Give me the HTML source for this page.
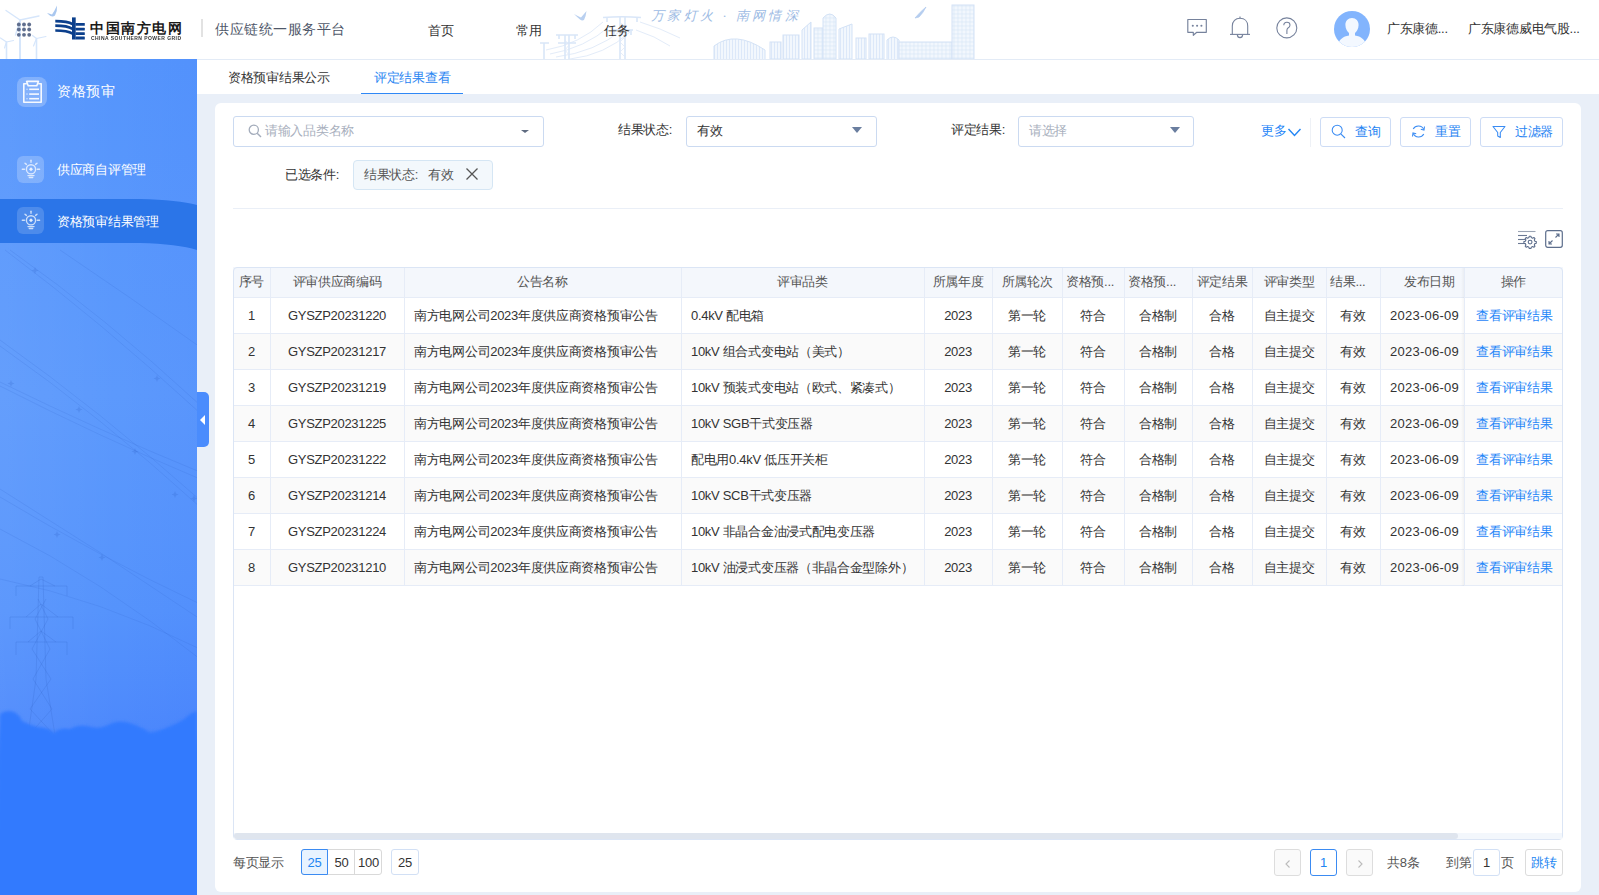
<!DOCTYPE html>
<html><head><meta charset="utf-8">
<style>
*{box-sizing:border-box;margin:0;padding:0}
html,body{width:1599px;height:895px;overflow:hidden;background:#e9eff8}
body{font-family:"Liberation Sans",sans-serif;font-size:13px;color:#333;position:relative;letter-spacing:-0.3px}
.a{position:absolute}
.t{position:absolute;white-space:nowrap;line-height:1}
#header{position:absolute;left:0;top:0;width:1599px;height:60px;background:#fff;border-bottom:1px solid #e3ebf6}
#side{position:absolute;left:0;top:59px;width:197px;height:836px;background:linear-gradient(90deg,rgba(255,255,255,0.05),rgba(255,255,255,0) 60%,rgba(0,40,255,0.03)),linear-gradient(180deg,#5595fc 0%,#5c99fc 40%,#5593fc 66%,#4d89fc 80%,#337afe 83%,#337afe 100%);overflow:hidden}
#tabs{position:absolute;left:197px;top:60px;width:1402px;height:34px;background:#fff}
#card{position:absolute;left:215px;top:103px;width:1366px;height:789px;background:#fff;border-radius:6px}
.inp{position:absolute;border:1px solid #cbdaf1;border-radius:3px;background:#fff;height:31px}
.caret{position:absolute;width:0;height:0;border-left:5px solid transparent;border-right:5px solid transparent;border-top:6px solid #6a7e9f}
.btn{position:absolute;border:1px solid #cddcf5;border-radius:3px;background:#fff;height:30px;color:#2c7ee2}
.thead{position:absolute;background:#f4f7fc}
.trow{position:absolute}
.hl{position:absolute;height:1px;background:#e6ecf7}
.vl{position:absolute;width:1px;background:#e6ecf7}
.th{position:absolute;text-align:center;color:#555;white-space:nowrap;overflow:hidden;font-size:13px}
.td{position:absolute;text-align:center;color:#333;white-space:nowrap;overflow:hidden;font-size:13px}
.td.l{text-align:left;padding-left:10px}
.td.link{color:#1f86f8;padding-left:2px}
.td.date{text-align:left;padding-left:10px;letter-spacing:0.25px}
.tbox{position:absolute;border:1px solid #dbe5f5;border-radius:4px}
.sbtrack{position:absolute;background:#f3f7fc}
.sbthumb{position:absolute;background:#dfe5ee;border-radius:3px}
.fixsh{position:absolute;width:3px;background:linear-gradient(90deg,rgba(0,0,0,0),rgba(0,0,0,0.04))}
.pg{position:absolute;height:27px;border:1px solid #dcdcdc;border-radius:3px;text-align:center;line-height:25px;background:#fff}
</style></head><body>

<div id="header">
  <!-- faint decoration left turbines -->
  <svg class="a" style="left:0;top:0" width="60" height="59" viewBox="0 0 60 59">
    <g stroke="#d6e6fb" fill="none" stroke-linecap="round">
      <path d="M20 20 L20 59" stroke-width="2"/>
      <path d="M20 20 L6 10.5 M20 20 L39 16 M20 20 L15.5 35" stroke-width="1.4"/>
      <path d="M6.5 42 L6.5 59 M36.5 38.5 L36.5 59" stroke-width="1.6"/>
      <path d="M6.5 42 L0.5 38 M6.5 42 L13.5 40.5 M6.5 42 L4.5 48 M36.5 38.5 L32.5 35.5 M36.5 38.5 L46 36.5 M36.5 38.5 L33.5 46" stroke-width="1.2"/>
    </g>
    <path d="M47 13 Q50 13.5 52 14.5 Q54.5 11 57 5.5 Q57.5 11 55 15.5 Q53 17 50.5 16 Q49 15 47 13 Z" fill="#a9c7ef"/>
  </svg>
  <!-- app grid dots -->
  <svg class="a" style="left:16px;top:22px" width="16" height="15" viewBox="0 0 16 15">
    <g fill="#5f6e8e">
      <circle cx="2.8" cy="2.5" r="1.9"/><circle cx="8" cy="2.5" r="1.9"/><circle cx="13.2" cy="2.5" r="1.9"/>
      <circle cx="2.8" cy="7.5" r="1.9"/><circle cx="8" cy="7.5" r="1.9"/><circle cx="13.2" cy="7.5" r="1.9"/>
      <circle cx="2.8" cy="12.8" r="1.9"/><circle cx="8" cy="12.8" r="1.9"/><circle cx="13.2" cy="12.8" r="1.9"/>
    </g>
  </svg>
  <!-- logo emblem -->
  <svg class="a" style="left:55px;top:17px" width="31" height="24" viewBox="0 0 31 24">
    <g fill="#0b3f8c">
      <rect x="17" y="0.4" width="3.7" height="22.1"/>
      <rect x="20.5" y="6" width="9.3" height="2.8" rx="0.5"/>
      <rect x="20.5" y="10.7" width="9.3" height="2.7" rx="0.5"/>
      <rect x="20.5" y="15.2" width="9.3" height="2.7" rx="0.5"/>
      <rect x="20.5" y="19.6" width="9.3" height="2.9" rx="0.5"/>
    </g>
    <g fill="none" stroke="#0b3f8c" stroke-width="2.7">
      <path d="M0.3 4.1 C8 4.1 13 4.3 17.5 7.2"/>
      <path d="M0.3 8.7 C8 8.7 13 9 17.5 11.9"/>
      <path d="M0.3 13.5 C8 13.5 13 13.8 17.5 16.6"/>
    </g>
  </svg>
  <div class="t" style="left:90px;top:21px;font-size:14px;font-weight:bold;color:#1a1a1a;letter-spacing:1.55px">中国南方电网</div>
  <div class="t" style="left:91px;top:35.5px;font-size:5px;font-weight:bold;color:#333;letter-spacing:0.45px;transform:scaleY(0.9)">CHINA SOUTHERN POWER GRID</div>
  <div class="a" style="left:201px;top:19px;width:2px;height:18px;background:#e2e2e2"></div>
  <div class="t" style="left:215px;top:22px;font-size:14px;color:#4f586a;letter-spacing:0.5px">供应链统一服务平台</div>

  <!-- pylons -->
  <svg class="a" style="left:540px;top:0" width="180" height="59" viewBox="0 0 180 59">
    <g fill="none" stroke="#e3ecf9" stroke-width="1">
      <path d="M6 50 Q40 44 63 22 M10 54 Q45 48 70 26 M16 57 Q55 52 82 30 M30 59 Q65 55 90 32"/>
      <path d="M100 22 Q120 28 140 38 M96 30 Q115 36 130 46"/>
    </g>
    <g fill="none" stroke="#d9e6f8" stroke-width="1.6">
      <path d="M63 17.5 Q82 16 101 17.5"/>
      <path d="M80 17 V59 M85 17 V59"/>
      <path d="M72 30 H93"/>
      <path d="M67 17 V22 M97 17 V22 M74 30 V35 M91 30 V35"/>
      <path d="M16 35 H38 M18 43 H36 M25 35 V59 M29 35 V59 M19 35 V39 M35 35 V39"/>
      <path d="M0 43 H9 M4 43 V59"/>
    </g>
    <g stroke="#dfe9f8" stroke-width="0.8" fill="none"><path d="M80 22 L85 27 L80 32 L85 37 L80 42 L85 47 L80 52 L85 57 M25 40 L29 45 L25 50 L29 55"/></g>
    <path d="M34 14 Q38 16 41 17.5 Q44 14 46.5 11 Q46 16 44 20 Q42 21 40 19.5 Q37 17 34 14 Z" fill="#b9d0f0"/>
  </svg>
  <!-- city decoration -->
  <svg class="a" style="left:560px;top:0" width="420" height="59" viewBox="0 0 420 59">
    <defs>
      <pattern id="win" width="3" height="3" patternUnits="userSpaceOnUse">
        <rect width="3" height="3" fill="#f2f7fd"/><line x1="1.5" y1="0" x2="1.5" y2="3" stroke="#d7e5f7" stroke-width="0.8"/>
      </pattern>
      <pattern id="grid" width="4" height="4" patternUnits="userSpaceOnUse">
        <rect width="4" height="4" fill="#f2f7fd"/><path d="M2 0 V4 M0 2 H4" stroke="#d9e6f7" stroke-width="0.7"/>
      </pattern>
    </defs>
    
    <g stroke="#d3e2f6" stroke-width="1">
      <path d="M154 59 V46 Q175 30 205 50 V59" fill="url(#win)"/>
      <rect x="210" y="42" width="11" height="17" fill="url(#win)"/>
      <rect x="223" y="35" width="16" height="24" fill="url(#win)"/>
      <path d="M242 59 V30 L251 22 V59 Z" fill="url(#win)"/>
      <rect x="254" y="28" width="9" height="31" fill="url(#grid)"/>
      <path d="M263 59 V18 Q270 10 276 18 V59 Z" fill="url(#grid)"/>
      <path d="M279 59 V29 L292 24 V59 Z" fill="url(#win)"/>
      <rect x="296" y="38" width="10" height="21" fill="url(#win)"/>
      <rect x="309" y="34" width="15" height="25" fill="url(#win)"/>
      <path d="M327 59 V40 Q333 34 339 40 V59" fill="url(#win)"/>
      <rect x="339" y="42" width="53" height="17" fill="url(#grid)"/>
      <rect x="392" y="5" width="22" height="54" fill="url(#grid)"/>
    </g>
    <path d="M355 18 Q360 12 366 7 Q363 13 359 17 Z" fill="#b5cdef" stroke="#b5cdef" stroke-width="0.8"/>
    <text x="91" y="20" font-size="13" fill="#9dbbe4" font-family="Liberation Serif,serif" font-style="italic" letter-spacing="3.3">万家灯火 · 南网情深</text>
  </svg>

  <div class="t" style="left:428px;top:24px;font-size:13px;color:#333">首页</div>
  <div class="t" style="left:516px;top:24px;font-size:13px;color:#333">常用</div>
  <div class="t" style="left:604px;top:24px;font-size:13px;color:#333">任务</div>

  <!-- right icons -->
  <svg class="a" style="left:1186px;top:18px" width="23" height="20" viewBox="0 0 23 20">
    <path d="M1.8 1.5 H20.3 V14.3 H10.8 L7.3 17.3 V14.3 H1.8 Z" fill="none" stroke="#76829c" stroke-width="1.15" stroke-linejoin="round"/>
    <circle cx="6.8" cy="7.8" r="1.05" fill="#76829c"/><circle cx="11.1" cy="7.8" r="1.05" fill="#76829c"/><circle cx="15.4" cy="7.8" r="1.05" fill="#76829c"/>
  </svg>
  <svg class="a" style="left:1229px;top:16px" width="22" height="23" viewBox="0 0 22 23">
    <path d="M3.3 18.4 V10 C3.3 5.2 6.5 2.3 11 2.3 C15.5 2.3 18.7 5.2 18.7 10 V18.4" fill="none" stroke="#76829c" stroke-width="1.1"/>
    <line x1="1" y1="18.4" x2="21" y2="18.4" stroke="#76829c" stroke-width="1.1"/>
    <path d="M8.3 18.6 Q8.5 21.6 11 21.6 Q13.5 21.6 13.7 18.6" fill="none" stroke="#76829c" stroke-width="1.1"/>
    <line x1="11" y1="0.6" x2="11" y2="2.4" stroke="#76829c" stroke-width="1.1"/>
  </svg>
  <svg class="a" style="left:1276px;top:17px" width="22" height="22" viewBox="0 0 22 22">
    <circle cx="10.8" cy="10.9" r="10" fill="none" stroke="#76829c" stroke-width="1.1"/>
    <path d="M7.8 8.3 Q7.8 5.2 10.9 5.2 Q14 5.2 14 8 Q14 9.8 12 11 Q10.9 11.8 10.9 13.5 V17" fill="none" stroke="#76829c" stroke-width="1.1"/>
  </svg>
  <svg class="a" style="left:1334px;top:11px" width="36" height="36" viewBox="0 0 36 36">
    <defs><clipPath id="avc"><circle cx="18" cy="18" r="18"/></clipPath></defs>
    <circle cx="18" cy="18" r="18" fill="#82b4fd"/>
    <g clip-path="url(#avc)" fill="#f3f8ff">
      <path d="M18 7 C22 7 24.6 10 24.6 14 C24.6 18 22.5 20.5 21 22 L21 24.5 C27 25.5 31 28 33 36 H3 C5 28 9 25.5 15 24.5 L15 22 C13.5 20.5 11.4 18 11.4 14 C11.4 10 14 7 18 7 Z"/>
    </g>
  </svg>
  <div class="t" style="left:1387px;top:22px;font-size:13px;color:#333">广东康德...</div>
  <div class="t" style="left:1468px;top:22px;font-size:13px;color:#333">广东康德威电气股...</div>
</div>

<div id="side">
  <!-- decorative power lines -->
  <svg class="a" style="left:0;top:0" width="197" height="836" viewBox="0 0 197 836"><defs><filter id="blr" x="-10%" y="-10%" width="120%" height="120%"><feGaussianBlur stdDeviation="1.6"/></filter></defs>
    <g stroke="rgba(45,95,200,0.16)" stroke-width="0.9" fill="none">
      <path d="M5 191 Q100 262 200 354"/><path d="M10 191 Q105 258 200 346"/>
      <path d="M60 191 Q130 238 200 288"/>
      <path d="M0 281 Q100 352 200 441"/><path d="M0 287 Q100 357 200 448"/>
      <path d="M0 323 Q100 372 200 413"/><path d="M0 327 Q100 378 200 420"/>
      <path d="M0 430 Q100 492 200 560"/><path d="M0 438 Q100 498 200 545"/>
      <path d="M0 470 Q100 520 200 600"/><path d="M0 520 Q100 540 200 590"/>
    </g>
    <g fill="rgba(45,95,200,0.22)">
      <path d="M35 208 l1 2.5 l2.5 1 l-2.5 1 l-1 2.5 l-1 -2.5 l-2.5 -1 l2.5 -1 z"/>
      <path d="M157 316 l1 2.5 l2.5 1 l-2.5 1 l-1 2.5 l-1 -2.5 l-2.5 -1 l2.5 -1 z"/>
      <path d="M79 347 l1 2.5 l2.5 1 l-2.5 1 l-1 2.5 l-1 -2.5 l-2.5 -1 l2.5 -1 z"/>
      <path d="M135 389 l1 2.5 l2.5 1 l-2.5 1 l-1 2.5 l-1 -2.5 l-2.5 -1 l2.5 -1 z"/>
      <path d="M194 436 l1 2.5 l2.5 1 l-2.5 1 l-1 2.5 l-1 -2.5 l-2.5 -1 l2.5 -1 z"/>
      <path d="M11 321 l1 2.5 l2.5 1 l-2.5 1 l-1 2.5 l-1 -2.5 l-2.5 -1 l2.5 -1 z"/>
      <path d="M57 472 l1 2.5 l2.5 1 l-2.5 1 l-1 2.5 l-1 -2.5 l-2.5 -1 l2.5 -1 z"/>
      <path d="M102 495 l1 2.5 l2.5 1 l-2.5 1 l-1 2.5 l-1 -2.5 l-2.5 -1 l2.5 -1 z"/>
      <path d="M175 432 l1 2.5 l2.5 1 l-2.5 1 l-1 2.5 l-1 -2.5 l-2.5 -1 l2.5 -1 z"/>
    </g>
    <g stroke="rgba(50,100,200,0.22)" stroke-width="1" fill="none">
      <path d="M39 518 L43 518 L46 620 L55 676 M39 518 L36 620 L28 676 M38 540 L48 560 L32 590 L51 620 L30 650 L54 676 M46 540 L35 560 L50 590 L33 620 L52 650 L29 676"/>
      <path d="M16 527 H67 M10 558 H73 M16 583 H67 M30 527 L41 520 L55 527 M26 558 L41 545 L58 558 M28 583 L41 572 L56 583"/>
      <path d="M16 527 V537 M67 527 V537 M10 558 V570 M73 558 V570 M16 583 V596 M67 583 V596"/>
    </g>
    <path d="M0 655 Q6 650 14 653 Q20 656 22 662 Q30 666 38 668 Q48 668 54 674 Q60 668 70 670 Q80 664 92 668 Q100 670 108 666 Q118 660 130 664 Q142 668 150 674 Q160 672 168 668 Q178 664 184 660 Q190 654 197 652 V850 H-5 Z" fill="#337afe" filter="url(#blr)"/>
  </svg>
  <!-- item 1 -->
  <div class="a" style="left:17px;top:18px;width:30px;height:30px;border-radius:8px;background:rgba(255,255,255,0.24)"></div>
  <svg class="a" style="left:22px;top:21px" width="22" height="25" viewBox="0 0 22 25">
    <g fill="none" stroke="rgba(255,255,255,0.92)" stroke-width="1.6" stroke-linejoin="round">
      <path d="M4.8 3.8 H1.8 V22.2 H19.2 V3.8 H16.2"/>
      <path d="M4.6 1.4 H16.4 L14.8 5.8 H6.2 Z"/>
      <line x1="7.2" y1="9.3" x2="17" y2="9.3"/><line x1="7.2" y1="14.1" x2="17" y2="14.1"/><line x1="7.2" y1="18.7" x2="17" y2="18.7"/>
    </g>
    <g fill="rgba(255,255,255,0.6)"><circle cx="5" cy="9.3" r="0.8"/><circle cx="5" cy="14.1" r="0.8"/><circle cx="5" cy="18.7" r="0.8"/></g>
  </svg>
  <div class="t" style="left:57px;top:25px;font-size:14px;color:#fff;letter-spacing:0.5px">资格预审</div>
  <!-- item 2 -->
  <div class="a" style="left:17px;top:97px;width:27px;height:27px;border-radius:6px;background:rgba(255,255,255,0.22)"></div>
  <svg class="a" style="left:21px;top:100px" width="20" height="20" viewBox="0 0 20 20">
    <g fill="none" stroke="rgba(255,255,255,0.72)" stroke-width="1.4" stroke-linecap="round">
      <circle cx="10" cy="10.3" r="4.6"/>
      <line x1="10" y1="1.3" x2="10" y2="3.2"/><line x1="1.3" y1="10.3" x2="3.5" y2="10.3"/><line x1="16.3" y1="10.3" x2="18.6" y2="10.3"/>
      <line x1="4" y1="4.2" x2="5.4" y2="5.4"/><line x1="16" y1="4.2" x2="14.6" y2="5.4"/>
      <line x1="7" y1="16.6" x2="13" y2="16.6"/><line x1="8.3" y1="18.5" x2="11.7" y2="18.5"/>
    </g>
    <path d="M10 8.3 L12 10.3 L10 12.3 L8 10.3 Z" fill="rgba(255,255,255,0.85)"/>
  </svg>
  <div class="t" style="left:57px;top:104px;font-size:13px;color:#fff">供应商自评管理</div>
  <!-- selected band -->
  <svg class="a" style="left:0;top:139px" width="197" height="54" viewBox="0 0 197 54">
    <path d="M0 1 L140 1 Q178 2 197 7 L197 52 Q178 46 140 45 L0 45 Z" fill="#2b75e8"/>
  </svg>
  <div class="a" style="left:17px;top:148px;width:27px;height:27px;border-radius:6px;background:rgba(255,255,255,0.16)"></div>
  <svg class="a" style="left:21px;top:151px" width="20" height="20" viewBox="0 0 20 20">
    <g fill="none" stroke="rgba(255,255,255,0.72)" stroke-width="1.4" stroke-linecap="round">
      <circle cx="10" cy="10.3" r="4.6"/>
      <line x1="10" y1="1.3" x2="10" y2="3.2"/><line x1="1.3" y1="10.3" x2="3.5" y2="10.3"/><line x1="16.3" y1="10.3" x2="18.6" y2="10.3"/>
      <line x1="4" y1="4.2" x2="5.4" y2="5.4"/><line x1="16" y1="4.2" x2="14.6" y2="5.4"/>
      <line x1="7" y1="16.6" x2="13" y2="16.6"/><line x1="8.3" y1="18.5" x2="11.7" y2="18.5"/>
    </g>
    <path d="M10 8.3 L12 10.3 L10 12.3 L8 10.3 Z" fill="rgba(255,255,255,0.85)"/>
  </svg>
  <div class="t" style="left:57px;top:155.5px;font-size:13px;color:#fff">资格预审结果管理</div>
</div>

<!-- collapse handle -->
<div class="a" style="left:197px;top:392px;width:12px;height:55px;background:#4a8cfd;border-radius:0 5px 5px 0"></div>
<div class="a" style="left:200px;top:415px;width:0;height:0;border-top:5px solid transparent;border-bottom:5px solid transparent;border-right:5px solid #fff"></div>

<div id="tabs">
  <div class="t" style="left:31px;top:11px;font-size:13px;color:#333">资格预审结果公示</div>
  <div class="t" style="left:177px;top:11px;font-size:13px;color:#2a85f2">评定结果查看</div>
  <div class="a" style="left:164px;top:32.5px;width:102px;height:1.5px;background:#2f88f6"></div>
</div>

<div id="card"></div>

<!-- filters -->
<div class="inp" style="left:233px;top:116px;width:311px"></div>
<svg class="a" style="left:248px;top:124px" width="14" height="14" viewBox="0 0 14 14">
  <circle cx="5.8" cy="5.8" r="4.6" fill="none" stroke="#a3acbb" stroke-width="1.3"/>
  <line x1="9.2" y1="9.2" x2="13" y2="13" stroke="#a3acbb" stroke-width="1.4"/>
</svg>
<div class="t" style="left:265px;top:124px;font-size:13px;color:#a8afbd">请输入品类名称</div>
<div class="caret" style="left:521px;top:130px;border-left-width:4px;border-right-width:4px;border-top-width:3px;border-top-color:#5f6b80"></div>

<div class="t" style="left:618px;top:123px;font-size:13px;color:#333">结果状态<span style="display:inline-block;width:13px">:</span></div>
<div class="inp" style="left:686px;top:116px;width:191px"></div>
<div class="t" style="left:697px;top:124px;font-size:13px;color:#333">有效</div>
<div class="caret" style="left:852px;top:127px"></div>

<div class="t" style="left:951px;top:123px;font-size:13px;color:#333">评定结果<span style="display:inline-block;width:13px">:</span></div>
<div class="inp" style="left:1018px;top:116px;width:176px"></div>
<div class="t" style="left:1029px;top:124px;font-size:13px;color:#a8afbd">请选择</div>
<div class="caret" style="left:1170px;top:127px"></div>

<div class="t" style="left:1261px;top:124px;font-size:13px;color:#1f86f8">更多</div>
<svg class="a" style="left:1287px;top:127px" width="15" height="10" viewBox="0 0 15 10">
  <path d="M1.5 2 L7.5 8.5 L13.5 2" fill="none" stroke="#2386f5" stroke-width="1.4"/>
</svg>
<div class="a" style="left:1310px;top:118px;width:1px;height:29px;background:#eef1f6"></div>

<div class="btn" style="left:1320px;top:117px;width:71px"></div>
<svg class="a" style="left:1331px;top:124px" width="15" height="15" viewBox="0 0 15 15">
  <circle cx="6.2" cy="6.2" r="5" fill="none" stroke="#3a8cf3" stroke-width="1.05"/>
  <line x1="9.8" y1="9.8" x2="14" y2="14" stroke="#3a8cf3" stroke-width="1.1"/>
</svg>
<div class="t" style="left:1355px;top:125px;font-size:13px;color:#1f84f3">查询</div>

<div class="btn" style="left:1400px;top:117px;width:71px"></div>
<svg class="a" style="left:1411px;top:124px" width="15" height="15" viewBox="0 0 15 15">
  <path d="M12.8 5.5 A6 6 0 0 0 2.2 5" fill="none" stroke="#3a8cf3" stroke-width="1.05"/>
  <path d="M2.2 9.5 A6 6 0 0 0 12.8 10" fill="none" stroke="#3a8cf3" stroke-width="1.05"/>
  <path d="M13.5 2.5 L13 6 L9.8 5.3" fill="none" stroke="#3a8cf3" stroke-width="1.05"/>
  <path d="M1.5 12.5 L2 9 L5.2 9.7" fill="none" stroke="#3a8cf3" stroke-width="1.05"/>
</svg>
<div class="t" style="left:1435px;top:125px;font-size:13px;color:#1f84f3">重置</div>

<div class="btn" style="left:1480px;top:117px;width:83px"></div>
<svg class="a" style="left:1492px;top:125px" width="14" height="14" viewBox="0 0 14 14">
  <path d="M1 1.5 H13 L8.3 7.5 V12.5 L5.7 11 V7.5 Z" fill="none" stroke="#3a8cf3" stroke-width="1.05" stroke-linejoin="round"/>
</svg>
<div class="t" style="left:1515px;top:125px;font-size:13px;color:#1f84f3">过滤器</div>

<!-- selected conditions -->
<div class="t" style="left:285px;top:168px;font-size:13px;color:#333">已选条件<span style="display:inline-block;width:13px">:</span></div>
<div class="a" style="left:353px;top:160px;width:140px;height:30px;background:#f3f8fc;border:1px solid #d5e6f4;border-radius:4px"></div>
<div class="t" style="left:364px;top:168px;font-size:13px;color:#555">结果状态<span style="display:inline-block;width:13px">:</span>有效</div>
<svg class="a" style="left:465px;top:167px" width="14" height="14" viewBox="0 0 14 14">
  <path d="M1.5 1.5 L12.5 12.5 M12.5 1.5 L1.5 12.5" stroke="#555" stroke-width="1.3"/>
</svg>

<div class="a" style="left:233px;top:208px;width:1330px;height:1px;background:#eaeff7"></div>

<!-- table tool icons -->
<svg class="a" style="left:1517px;top:229px" width="20" height="20" viewBox="0 0 20 20">
  <g stroke="#6a7893" stroke-width="1.1" fill="none">
    <line x1="1" y1="2.5" x2="18.5" y2="2.5" stroke="#9aa3b3"/>
    <line x1="1" y1="6.5" x2="10" y2="6.5"/>
    <line x1="1" y1="10.5" x2="8" y2="10.5"/>
    <line x1="1" y1="14.5" x2="8" y2="14.5"/>
  </g>
  <path d="M12.3 7.2 h1.6 l0.4 1.4 l1.3 0.6 l1.3 -0.7 l1.1 1.1 l-0.7 1.3 l0.6 1.3 l1.4 0.4 v1.6 l-1.4 0.4 l-0.6 1.3 l0.7 1.3 l-1.1 1.1 l-1.3 -0.7 l-1.3 0.6 l-0.4 1.4 h-1.6 l-0.4 -1.4 l-1.3 -0.6 l-1.3 0.7 l-1.1 -1.1 l0.7 -1.3 l-0.6 -1.3 l-1.4 -0.4 v-1.6 l1.4 -0.4 l0.6 -1.3 l-0.7 -1.3 l1.1 -1.1 l1.3 0.7 l1.3 -0.6 z" fill="#fff" stroke="#5d6e8c" stroke-width="1.1" stroke-linejoin="round"/>
  <circle cx="13.1" cy="13.1" r="1.9" fill="none" stroke="#5d6e8c" stroke-width="1.1"/>
</svg>
<svg class="a" style="left:1545px;top:230px" width="18" height="18" viewBox="0 0 18 18">
  <rect x="0.7" y="0.7" width="16.6" height="16.6" rx="2" fill="none" stroke="#5d6e8c" stroke-width="1.2"/>
  <path d="M10.5 7.5 L14 4 M11 4 H14 V7" fill="none" stroke="#5d6e8c" stroke-width="1.1"/>
  <path d="M7.5 10.5 L4 14 M4 11 V14 H7" fill="none" stroke="#5d6e8c" stroke-width="1.1"/>
</svg>

<div class="thead" style="left:233px;top:267px;width:1330px;height:30px"></div>
<div class="trow" style="left:233px;top:297px;width:1330px;height:36px;background:#fff"></div>
<div class="trow" style="left:233px;top:333px;width:1330px;height:36px;background:#fafafa"></div>
<div class="trow" style="left:233px;top:369px;width:1330px;height:36px;background:#fff"></div>
<div class="trow" style="left:233px;top:405px;width:1330px;height:36px;background:#fafafa"></div>
<div class="trow" style="left:233px;top:441px;width:1330px;height:36px;background:#fff"></div>
<div class="trow" style="left:233px;top:477px;width:1330px;height:36px;background:#fafafa"></div>
<div class="trow" style="left:233px;top:513px;width:1330px;height:36px;background:#fff"></div>
<div class="trow" style="left:233px;top:549px;width:1330px;height:36px;background:#fafafa"></div>
<div class="hl" style="left:233px;top:297px;width:1330px"></div>
<div class="hl" style="left:233px;top:333px;width:1330px"></div>
<div class="hl" style="left:233px;top:369px;width:1330px"></div>
<div class="hl" style="left:233px;top:405px;width:1330px"></div>
<div class="hl" style="left:233px;top:441px;width:1330px"></div>
<div class="hl" style="left:233px;top:477px;width:1330px"></div>
<div class="hl" style="left:233px;top:513px;width:1330px"></div>
<div class="hl" style="left:233px;top:549px;width:1330px"></div>
<div class="hl" style="left:233px;top:585px;width:1330px"></div>
<div class="vl" style="left:270px;top:267px;height:318px"></div>
<div class="vl" style="left:404px;top:267px;height:318px"></div>
<div class="vl" style="left:681px;top:267px;height:318px"></div>
<div class="vl" style="left:924px;top:267px;height:318px"></div>
<div class="vl" style="left:992px;top:267px;height:318px"></div>
<div class="vl" style="left:1062px;top:267px;height:318px"></div>
<div class="vl" style="left:1124px;top:267px;height:318px"></div>
<div class="vl" style="left:1192px;top:267px;height:318px"></div>
<div class="vl" style="left:1252px;top:267px;height:318px"></div>
<div class="vl" style="left:1326px;top:267px;height:318px"></div>
<div class="vl" style="left:1380px;top:267px;height:318px"></div>
<div class="vl" style="left:1464px;top:267px;height:318px"></div>
<div class="th" style="left:233px;top:267px;width:37px;height:30px;line-height:30px;">序号</div>
<div class="th" style="left:270px;top:267px;width:134px;height:30px;line-height:30px;">评审供应商编码</div>
<div class="th" style="left:404px;top:267px;width:277px;height:30px;line-height:30px;">公告名称</div>
<div class="th" style="left:681px;top:267px;width:243px;height:30px;line-height:30px;">评审品类</div>
<div class="th" style="left:924px;top:267px;width:68px;height:30px;line-height:30px;">所属年度</div>
<div class="th" style="left:992px;top:267px;width:70px;height:30px;line-height:30px;">所属轮次</div>
<div class="th" style="left:1062px;top:267px;width:62px;height:30px;line-height:30px;text-align:left;padding-left:4px;">资格预...</div>
<div class="th" style="left:1124px;top:267px;width:68px;height:30px;line-height:30px;text-align:left;padding-left:4px;">资格预...</div>
<div class="th" style="left:1192px;top:267px;width:60px;height:30px;line-height:30px;">评定结果</div>
<div class="th" style="left:1252px;top:267px;width:74px;height:30px;line-height:30px;">评审类型</div>
<div class="th" style="left:1326px;top:267px;width:54px;height:30px;line-height:30px;text-align:left;padding-left:4px;">结果...</div>
<div class="th" style="left:1380px;top:267px;width:84px;height:30px;line-height:30px;text-align:left;padding-left:24px;">发布日期</div>
<div class="th" style="left:1464px;top:267px;width:99px;height:30px;line-height:30px;">操作</div>
<div class="td" style="left:233px;top:297px;width:37px;height:36px;line-height:35px;padding-top:1px">1</div>
<div class="td" style="left:270px;top:297px;width:134px;height:36px;line-height:35px;padding-top:1px">GYSZP20231220</div>
<div class="td l" style="left:404px;top:297px;width:277px;height:36px;line-height:35px;padding-top:1px">南方电网公司2023年度供应商资格预审公告</div>
<div class="td l" style="left:681px;top:297px;width:243px;height:36px;line-height:35px;padding-top:1px">0.4kV 配电箱</div>
<div class="td" style="left:924px;top:297px;width:68px;height:36px;line-height:35px;padding-top:1px">2023</div>
<div class="td" style="left:992px;top:297px;width:70px;height:36px;line-height:35px;padding-top:1px">第一轮</div>
<div class="td" style="left:1062px;top:297px;width:62px;height:36px;line-height:35px;padding-top:1px">符合</div>
<div class="td" style="left:1124px;top:297px;width:68px;height:36px;line-height:35px;padding-top:1px">合格制</div>
<div class="td" style="left:1192px;top:297px;width:60px;height:36px;line-height:35px;padding-top:1px">合格</div>
<div class="td" style="left:1252px;top:297px;width:74px;height:36px;line-height:35px;padding-top:1px">自主提交</div>
<div class="td" style="left:1326px;top:297px;width:54px;height:36px;line-height:35px;padding-top:1px">有效</div>
<div class="td date" style="left:1380px;top:297px;width:84px;height:36px;line-height:35px;padding-top:1px">2023-06-09</div>
<div class="td link" style="left:1464px;top:297px;width:99px;height:36px;line-height:35px;padding-top:1px">查看评审结果</div>
<div class="td" style="left:233px;top:333px;width:37px;height:36px;line-height:35px;padding-top:1px">2</div>
<div class="td" style="left:270px;top:333px;width:134px;height:36px;line-height:35px;padding-top:1px">GYSZP20231217</div>
<div class="td l" style="left:404px;top:333px;width:277px;height:36px;line-height:35px;padding-top:1px">南方电网公司2023年度供应商资格预审公告</div>
<div class="td l" style="left:681px;top:333px;width:243px;height:36px;line-height:35px;padding-top:1px">10kV 组合式变电站（美式）</div>
<div class="td" style="left:924px;top:333px;width:68px;height:36px;line-height:35px;padding-top:1px">2023</div>
<div class="td" style="left:992px;top:333px;width:70px;height:36px;line-height:35px;padding-top:1px">第一轮</div>
<div class="td" style="left:1062px;top:333px;width:62px;height:36px;line-height:35px;padding-top:1px">符合</div>
<div class="td" style="left:1124px;top:333px;width:68px;height:36px;line-height:35px;padding-top:1px">合格制</div>
<div class="td" style="left:1192px;top:333px;width:60px;height:36px;line-height:35px;padding-top:1px">合格</div>
<div class="td" style="left:1252px;top:333px;width:74px;height:36px;line-height:35px;padding-top:1px">自主提交</div>
<div class="td" style="left:1326px;top:333px;width:54px;height:36px;line-height:35px;padding-top:1px">有效</div>
<div class="td date" style="left:1380px;top:333px;width:84px;height:36px;line-height:35px;padding-top:1px">2023-06-09</div>
<div class="td link" style="left:1464px;top:333px;width:99px;height:36px;line-height:35px;padding-top:1px">查看评审结果</div>
<div class="td" style="left:233px;top:369px;width:37px;height:36px;line-height:35px;padding-top:1px">3</div>
<div class="td" style="left:270px;top:369px;width:134px;height:36px;line-height:35px;padding-top:1px">GYSZP20231219</div>
<div class="td l" style="left:404px;top:369px;width:277px;height:36px;line-height:35px;padding-top:1px">南方电网公司2023年度供应商资格预审公告</div>
<div class="td l" style="left:681px;top:369px;width:243px;height:36px;line-height:35px;padding-top:1px">10kV 预装式变电站（欧式、紧凑式）</div>
<div class="td" style="left:924px;top:369px;width:68px;height:36px;line-height:35px;padding-top:1px">2023</div>
<div class="td" style="left:992px;top:369px;width:70px;height:36px;line-height:35px;padding-top:1px">第一轮</div>
<div class="td" style="left:1062px;top:369px;width:62px;height:36px;line-height:35px;padding-top:1px">符合</div>
<div class="td" style="left:1124px;top:369px;width:68px;height:36px;line-height:35px;padding-top:1px">合格制</div>
<div class="td" style="left:1192px;top:369px;width:60px;height:36px;line-height:35px;padding-top:1px">合格</div>
<div class="td" style="left:1252px;top:369px;width:74px;height:36px;line-height:35px;padding-top:1px">自主提交</div>
<div class="td" style="left:1326px;top:369px;width:54px;height:36px;line-height:35px;padding-top:1px">有效</div>
<div class="td date" style="left:1380px;top:369px;width:84px;height:36px;line-height:35px;padding-top:1px">2023-06-09</div>
<div class="td link" style="left:1464px;top:369px;width:99px;height:36px;line-height:35px;padding-top:1px">查看评审结果</div>
<div class="td" style="left:233px;top:405px;width:37px;height:36px;line-height:35px;padding-top:1px">4</div>
<div class="td" style="left:270px;top:405px;width:134px;height:36px;line-height:35px;padding-top:1px">GYSZP20231225</div>
<div class="td l" style="left:404px;top:405px;width:277px;height:36px;line-height:35px;padding-top:1px">南方电网公司2023年度供应商资格预审公告</div>
<div class="td l" style="left:681px;top:405px;width:243px;height:36px;line-height:35px;padding-top:1px">10kV SGB干式变压器</div>
<div class="td" style="left:924px;top:405px;width:68px;height:36px;line-height:35px;padding-top:1px">2023</div>
<div class="td" style="left:992px;top:405px;width:70px;height:36px;line-height:35px;padding-top:1px">第一轮</div>
<div class="td" style="left:1062px;top:405px;width:62px;height:36px;line-height:35px;padding-top:1px">符合</div>
<div class="td" style="left:1124px;top:405px;width:68px;height:36px;line-height:35px;padding-top:1px">合格制</div>
<div class="td" style="left:1192px;top:405px;width:60px;height:36px;line-height:35px;padding-top:1px">合格</div>
<div class="td" style="left:1252px;top:405px;width:74px;height:36px;line-height:35px;padding-top:1px">自主提交</div>
<div class="td" style="left:1326px;top:405px;width:54px;height:36px;line-height:35px;padding-top:1px">有效</div>
<div class="td date" style="left:1380px;top:405px;width:84px;height:36px;line-height:35px;padding-top:1px">2023-06-09</div>
<div class="td link" style="left:1464px;top:405px;width:99px;height:36px;line-height:35px;padding-top:1px">查看评审结果</div>
<div class="td" style="left:233px;top:441px;width:37px;height:36px;line-height:35px;padding-top:1px">5</div>
<div class="td" style="left:270px;top:441px;width:134px;height:36px;line-height:35px;padding-top:1px">GYSZP20231222</div>
<div class="td l" style="left:404px;top:441px;width:277px;height:36px;line-height:35px;padding-top:1px">南方电网公司2023年度供应商资格预审公告</div>
<div class="td l" style="left:681px;top:441px;width:243px;height:36px;line-height:35px;padding-top:1px">配电用0.4kV 低压开关柜</div>
<div class="td" style="left:924px;top:441px;width:68px;height:36px;line-height:35px;padding-top:1px">2023</div>
<div class="td" style="left:992px;top:441px;width:70px;height:36px;line-height:35px;padding-top:1px">第一轮</div>
<div class="td" style="left:1062px;top:441px;width:62px;height:36px;line-height:35px;padding-top:1px">符合</div>
<div class="td" style="left:1124px;top:441px;width:68px;height:36px;line-height:35px;padding-top:1px">合格制</div>
<div class="td" style="left:1192px;top:441px;width:60px;height:36px;line-height:35px;padding-top:1px">合格</div>
<div class="td" style="left:1252px;top:441px;width:74px;height:36px;line-height:35px;padding-top:1px">自主提交</div>
<div class="td" style="left:1326px;top:441px;width:54px;height:36px;line-height:35px;padding-top:1px">有效</div>
<div class="td date" style="left:1380px;top:441px;width:84px;height:36px;line-height:35px;padding-top:1px">2023-06-09</div>
<div class="td link" style="left:1464px;top:441px;width:99px;height:36px;line-height:35px;padding-top:1px">查看评审结果</div>
<div class="td" style="left:233px;top:477px;width:37px;height:36px;line-height:35px;padding-top:1px">6</div>
<div class="td" style="left:270px;top:477px;width:134px;height:36px;line-height:35px;padding-top:1px">GYSZP20231214</div>
<div class="td l" style="left:404px;top:477px;width:277px;height:36px;line-height:35px;padding-top:1px">南方电网公司2023年度供应商资格预审公告</div>
<div class="td l" style="left:681px;top:477px;width:243px;height:36px;line-height:35px;padding-top:1px">10kV SCB干式变压器</div>
<div class="td" style="left:924px;top:477px;width:68px;height:36px;line-height:35px;padding-top:1px">2023</div>
<div class="td" style="left:992px;top:477px;width:70px;height:36px;line-height:35px;padding-top:1px">第一轮</div>
<div class="td" style="left:1062px;top:477px;width:62px;height:36px;line-height:35px;padding-top:1px">符合</div>
<div class="td" style="left:1124px;top:477px;width:68px;height:36px;line-height:35px;padding-top:1px">合格制</div>
<div class="td" style="left:1192px;top:477px;width:60px;height:36px;line-height:35px;padding-top:1px">合格</div>
<div class="td" style="left:1252px;top:477px;width:74px;height:36px;line-height:35px;padding-top:1px">自主提交</div>
<div class="td" style="left:1326px;top:477px;width:54px;height:36px;line-height:35px;padding-top:1px">有效</div>
<div class="td date" style="left:1380px;top:477px;width:84px;height:36px;line-height:35px;padding-top:1px">2023-06-09</div>
<div class="td link" style="left:1464px;top:477px;width:99px;height:36px;line-height:35px;padding-top:1px">查看评审结果</div>
<div class="td" style="left:233px;top:513px;width:37px;height:36px;line-height:35px;padding-top:1px">7</div>
<div class="td" style="left:270px;top:513px;width:134px;height:36px;line-height:35px;padding-top:1px">GYSZP20231224</div>
<div class="td l" style="left:404px;top:513px;width:277px;height:36px;line-height:35px;padding-top:1px">南方电网公司2023年度供应商资格预审公告</div>
<div class="td l" style="left:681px;top:513px;width:243px;height:36px;line-height:35px;padding-top:1px">10kV 非晶合金油浸式配电变压器</div>
<div class="td" style="left:924px;top:513px;width:68px;height:36px;line-height:35px;padding-top:1px">2023</div>
<div class="td" style="left:992px;top:513px;width:70px;height:36px;line-height:35px;padding-top:1px">第一轮</div>
<div class="td" style="left:1062px;top:513px;width:62px;height:36px;line-height:35px;padding-top:1px">符合</div>
<div class="td" style="left:1124px;top:513px;width:68px;height:36px;line-height:35px;padding-top:1px">合格制</div>
<div class="td" style="left:1192px;top:513px;width:60px;height:36px;line-height:35px;padding-top:1px">合格</div>
<div class="td" style="left:1252px;top:513px;width:74px;height:36px;line-height:35px;padding-top:1px">自主提交</div>
<div class="td" style="left:1326px;top:513px;width:54px;height:36px;line-height:35px;padding-top:1px">有效</div>
<div class="td date" style="left:1380px;top:513px;width:84px;height:36px;line-height:35px;padding-top:1px">2023-06-09</div>
<div class="td link" style="left:1464px;top:513px;width:99px;height:36px;line-height:35px;padding-top:1px">查看评审结果</div>
<div class="td" style="left:233px;top:549px;width:37px;height:36px;line-height:35px;padding-top:1px">8</div>
<div class="td" style="left:270px;top:549px;width:134px;height:36px;line-height:35px;padding-top:1px">GYSZP20231210</div>
<div class="td l" style="left:404px;top:549px;width:277px;height:36px;line-height:35px;padding-top:1px">南方电网公司2023年度供应商资格预审公告</div>
<div class="td l" style="left:681px;top:549px;width:243px;height:36px;line-height:35px;padding-top:1px">10kV 油浸式变压器（非晶合金型除外）</div>
<div class="td" style="left:924px;top:549px;width:68px;height:36px;line-height:35px;padding-top:1px">2023</div>
<div class="td" style="left:992px;top:549px;width:70px;height:36px;line-height:35px;padding-top:1px">第一轮</div>
<div class="td" style="left:1062px;top:549px;width:62px;height:36px;line-height:35px;padding-top:1px">符合</div>
<div class="td" style="left:1124px;top:549px;width:68px;height:36px;line-height:35px;padding-top:1px">合格制</div>
<div class="td" style="left:1192px;top:549px;width:60px;height:36px;line-height:35px;padding-top:1px">合格</div>
<div class="td" style="left:1252px;top:549px;width:74px;height:36px;line-height:35px;padding-top:1px">自主提交</div>
<div class="td" style="left:1326px;top:549px;width:54px;height:36px;line-height:35px;padding-top:1px">有效</div>
<div class="td date" style="left:1380px;top:549px;width:84px;height:36px;line-height:35px;padding-top:1px">2023-06-09</div>
<div class="td link" style="left:1464px;top:549px;width:99px;height:36px;line-height:35px;padding-top:1px">查看评审结果</div>
<div class="tbox" style="left:233px;top:267px;width:1330px;height:573px"></div>
<div class="sbtrack" style="left:234px;top:833px;width:1328px;height:6px"></div>
<div class="sbthumb" style="left:234px;top:833px;width:1224px;height:6px"></div>
<div class="fixsh" style="left:1461px;top:268px;height:318px"></div>

<!-- pagination -->
<div class="t" style="left:233px;top:856px;font-size:13px;color:#555">每页显示</div>
<div class="a" style="left:301px;top:849px;width:81px;height:26px;border:1px solid #d9d9d9;border-radius:3px;background:#fff"></div>
<div class="a" style="left:354px;top:849px;width:1px;height:26px;background:#d9d9d9"></div>
<div class="a" style="left:301px;top:849px;width:27px;height:26px;border:1px solid #3b8bf2;border-radius:3px 0 0 3px;background:#e8f3ff"></div>
<div class="t" style="left:301px;top:849px;width:27px;height:26px;line-height:28px;text-align:center;color:#2185f2">25</div>
<div class="t" style="left:328px;top:849px;width:27px;height:26px;line-height:28px;text-align:center;color:#333">50</div>
<div class="t" style="left:355px;top:849px;width:27px;height:26px;line-height:28px;text-align:center;color:#333">100</div>
<div class="a" style="left:391px;top:849px;width:28px;height:26px;border:1px solid #d2e0f5;border-radius:3px;background:#fff"></div>
<div class="t" style="left:391px;top:849px;width:28px;height:26px;line-height:28px;text-align:center;color:#333">25</div>

<div class="pg" style="left:1274px;top:849px;width:27px;background:#fafafa;border-color:#ddd"></div>
<svg class="a" style="left:1283px;top:859px" width="10" height="10" viewBox="0 0 10 10"><path d="M6.5 1.5 L3 5 L6.5 8.5" fill="none" stroke="#bbb" stroke-width="1.1"/></svg>
<div class="pg" style="left:1310px;top:849px;width:27px;border-color:#3b8bf2;color:#2185f2">1</div>
<div class="pg" style="left:1346px;top:849px;width:27px;background:#fafafa;border-color:#ddd"></div>
<svg class="a" style="left:1355px;top:859px" width="10" height="10" viewBox="0 0 10 10"><path d="M3.5 1.5 L7 5 L3.5 8.5" fill="none" stroke="#bbb" stroke-width="1.1"/></svg>
<div class="t" style="left:1387px;top:856px;font-size:13px;color:#555">共8条</div>
<div class="t" style="left:1446px;top:856px;font-size:13px;color:#555">到第</div>
<div class="pg" style="left:1473px;top:849px;width:27px;border-color:#d2e0f5;color:#333">1</div>
<div class="t" style="left:1501px;top:856px;font-size:13px;color:#555">页</div>
<div class="pg" style="left:1525px;top:849px;width:38px;border-color:#dcdcdc;color:#2185f2">跳转</div>

</body></html>
